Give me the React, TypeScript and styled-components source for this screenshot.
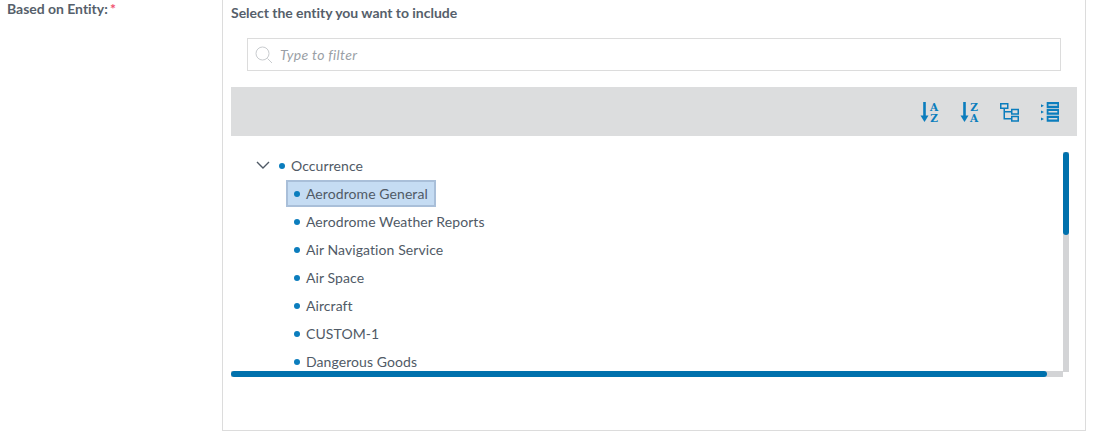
import { createGlobalStyle } from "styled-components";
import styled from "styled-components";

const GlobalStyle = createGlobalStyle`
  html, body {
    margin: 0;
    padding: 0;
    background: #ffffff;
    overflow: hidden;
  }
  body {
    font-family: Lato, "Open Sans", sans-serif;
    color: #4f5965;
  }
`;

const Page = styled.div`
  display: flex;
  width: 1093px;
  height: 439px;
  box-sizing: border-box;
`;

const LabelCol = styled.div`
  width: 222px;
  flex: none;
  padding: 1px 0 0 7px;
  box-sizing: border-box;
  font-size: 14px;
  line-height: 16px;
  font-weight: 700;
  letter-spacing: -0.03px;
  color: #565f6b;
`;

const Required = styled.span`
  color: #f0506e;
  margin-left: -1px;
`;

const Panel = styled.div`
  width: 864px;
  height: 431px;
  flex: none;
  box-sizing: border-box;
  border: 1px solid #dcdcdc;
  border-top: none;
  padding: 4px 8px 0;
`;

const Heading = styled.div`
  font-size: 14px;
  line-height: 17px;
  font-weight: 700;
  letter-spacing: -0.03px;
  color: #565f6b;
`;

const FilterBox = styled.div`
  display: flex;
  align-items: center;
  gap: 7px;
  height: 33px;
  box-sizing: border-box;
  margin: 17px 16px 16px;
  padding-left: 7px;
  border: 1px solid #dcdcdc;
  font-size: 14px;
  letter-spacing: 0.3px;
  font-style: italic;
  color: #9a9fa6;
`;

const Toolbar = styled.div`
  display: flex;
  justify-content: flex-end;
  align-items: center;
  gap: 22px;
  height: 49px;
  padding-right: 18px;
  background: #dcddde;
`;

const IconSlot = styled.svg`
  display: block;
  width: 18px;
  height: 20px;
  overflow: visible;
  color: #0b7dbd;
`;

const TreeArea = styled.div`
  position: relative;
  width: 838px;
  height: 241px;
  overflow: hidden;
  padding-top: 15px;
  box-sizing: border-box;
`;

const Row = styled.div<{ $child?: boolean }>`
  display: flex;
  align-items: center;
  height: 28px;
  padding-left: ${(p) => (p.$child ? "55px" : "25px")};
  font-size: 14px;
  letter-spacing: 0.08px;
  color: #505a66;
`;

const Chevron = styled.svg`
  width: 14px;
  height: 8px;
  margin-right: 9px;
  color: #4f5965;
`;

const Dot = styled.span`
  width: 6px;
  height: 6px;
  border-radius: 50%;
  background: #0b7dbd;
  flex: none;
  margin: 1px 6px 0 0;
`;

const Label = styled.span<{ $selected?: boolean }>`
  display: flex;
  align-items: center;
  height: 27px;
  box-sizing: border-box;
  ${(p) =>
    p.$selected
      ? `
    background: #c5dcf3;
    border: 2px solid #a9bfd9;
    padding: 0 6px;
  `
      : `
    padding: 0 0 0 8px;
  `}
`;

const ScrollTrackV = styled.div`
  position: absolute;
  top: 16px;
  right: 0;
  width: 6px;
  height: 220px;
  background: #d3d4d6;
`;

const ScrollThumbV = styled.div`
  width: 6px;
  height: 83px;
  border-radius: 3px;
  background: #0071ad;
`;

const ScrollTrackH = styled.div`
  position: absolute;
  left: 0;
  bottom: 0;
  width: 832px;
  height: 6px;
  background: #d3d4d6;
`;

const ScrollThumbH = styled.div`
  width: 816px;
  height: 6px;
  border-radius: 3px;
  background: #0071ad;
`;

const children = [
  "Aerodrome General",
  "Aerodrome Weather Reports",
  "Air Navigation Service",
  "Air Space",
  "Aircraft",
  "CUSTOM-1",
  "Dangerous Goods",
];

const SearchIcon = () => (
  <svg width="18" height="18" viewBox="0 0 18 18" fill="none" stroke="#c9cccf" strokeWidth="1">
    <circle cx="7.5" cy="7.5" r="6.5" />
    <path d="M12.5 12.5L17 17" />
  </svg>
);

const SortLetters = ({ top, bottom }: { top: string; bottom: string }) => (
  <>
    <path d="M3.5 0v15" stroke="currentColor" strokeWidth="2.6" fill="none" />
    <path d="M-0.5 13.5h8L3.5 20z" fill="currentColor" />
    <text x="13" y="9" textAnchor="middle" fontSize="10.5" fontWeight="700" fontFamily="DejaVu Serif, serif" fill="currentColor">
      {top}
    </text>
    <text x="13" y="20" textAnchor="middle" fontSize="10.5" fontWeight="700" fontFamily="DejaVu Serif, serif" fill="currentColor">
      {bottom}
    </text>
  </>
);

const App = () => {
  return (
    <Page>
      <GlobalStyle />
      <LabelCol>
        Based on Entity: <Required>*</Required>
      </LabelCol>
      <Panel>
        <Heading>Select the entity you want to include</Heading>
        <FilterBox>
          <SearchIcon />
          Type to filter
        </FilterBox>
        <Toolbar>
          <IconSlot viewBox="0 0 18 20">
            <SortLetters top="A" bottom="Z" />
          </IconSlot>
          <IconSlot viewBox="0 0 18 20">
            <SortLetters top="Z" bottom="A" />
          </IconSlot>
          <IconSlot viewBox="0 0 18 20" fill="none" stroke="currentColor" strokeWidth="1.5">
            <rect x="-0.25" y="1.75" width="7" height="4.5" />
            <rect x="10.75" y="7.5" width="6.5" height="4.5" />
            <rect x="10.75" y="14.5" width="6.5" height="4.5" />
            <path d="M3.25 6.25v10.5h7.5M3.25 9.75h7.5" />
          </IconSlot>
          <IconSlot viewBox="0 0 18 20">
            <path d="M0 2.2l3 1.5-3 1.5zM0 8.5l3 1.5-3 1.5zM0 15.5l3 1.5-3 1.5z" fill="currentColor" />
            <path d="M5.7 0H18v6H5.7zM5.7 6.8H18v6H5.7zM5.7 13.8H18v6H5.7z" fill="currentColor" />
            <path d="M7.5 3h8.8M7.5 9.8h8.8M7.5 16.8h8.8" stroke="#dcddde" strokeWidth="1.6" />
          </IconSlot>
        </Toolbar>
        <TreeArea>
          <Row>
            <Chevron viewBox="0 0 14 8" fill="none" stroke="currentColor" strokeWidth="1.4">
              <path d="M1 1l6 6 6-6" />
            </Chevron>
            <Dot />
            {"Occurrence"}
          </Row>
          {children.map((name, i) => (
            <Row $child key={name}>
              <Label $selected={i === 0}>
                <Dot />
                {name}
              </Label>
            </Row>
          ))}
          <ScrollTrackV>
            <ScrollThumbV />
          </ScrollTrackV>
          <ScrollTrackH>
            <ScrollThumbH />
          </ScrollTrackH>
        </TreeArea>
      </Panel>
    </Page>
  );
};

export default App;
